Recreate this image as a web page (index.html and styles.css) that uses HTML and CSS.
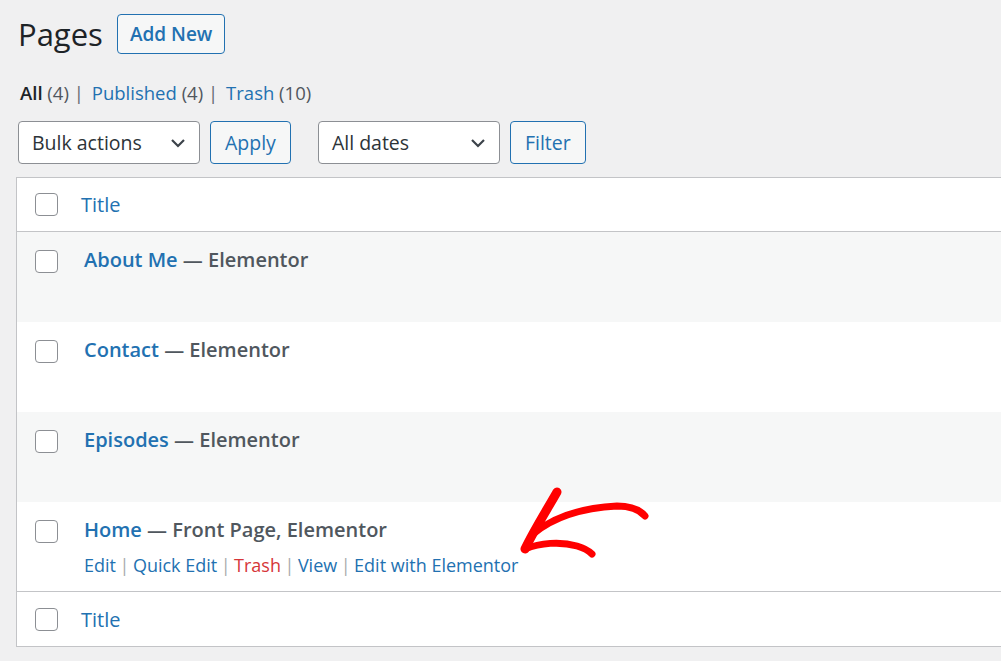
FILE: index.html
```html
<!DOCTYPE html>
<html lang="en">
<head>
    <meta charset="UTF-8">
    <title>Pages</title>
    <link rel="stylesheet" href="styles.css">
</head>
<body>

    <div class="wrap">

        <!-- Kopfzeile -->
        <div class="page-head">
            <h1>Pages</h1>
            <a class="add-new" href="#">Add New</a>
        </div>

        <ul class="subsubsub">
            <li><a class="current" href="#">All <span class="count">(4)</span></a> |</li>
            <li><a href="#">Published <span class="count">(4)</span></a> |</li>
            <li><a href="#">Trash <span class="count">(10)</span></a></li>
        </ul>

        <!-- Filter -->
        <div class="tablenav">
            <div class="select bulk">
                <span>Bulk actions</span>
                <svg width="16" height="10" viewBox="0 0 16 10"><path d="M2 2l6 6 6-6" fill="none" stroke="#3c434a" stroke-width="2.2"/></svg>
            </div>
            <button class="button">Apply</button>
            <div class="select dates">
                <span>All dates</span>
                <svg width="16" height="10" viewBox="0 0 16 10"><path d="M2 2l6 6 6-6" fill="none" stroke="#3c434a" stroke-width="2.2"/></svg>
            </div>
            <button class="button">Filter</button>
        </div>

        <!-- Tabelle -->
        <table class="pages">
            <thead>
                <tr>
                    <td class="check"><span class="cb"></span></td>
                    <th><a href="#">Title</a></th>
                </tr>
            </thead>
            <tbody>
                <tr class="alt">
                    <td class="check"><span class="cb"></span></td>
                    <td><strong><a href="#">About Me</a> — <span class="state">Elementor</span></strong></td>
                </tr>
                <tr>
                    <td class="check"><span class="cb"></span></td>
                    <td><strong><a href="#">Contact</a> — <span class="state">Elementor</span></strong></td>
                </tr>
                <tr class="alt">
                    <td class="check"><span class="cb"></span></td>
                    <td><strong><a href="#">Episodes</a> — <span class="state">Elementor</span></strong></td>
                </tr>
                <tr class="hover">
                    <td class="check"><span class="cb"></span></td>
                    <td>
                        <strong><a href="#">Home</a> — <span class="state">Front Page, Elementor</span></strong>
                        <div class="row-actions">
                            <a href="#">Edit</a><span class="sep">|</span><a href="#">Quick Edit</a><span class="sep">|</span><a class="trash" href="#">Trash</a><span class="sep">|</span><a href="#">View</a><span class="sep">|</span><a href="#">Edit with Elementor</a>
                        </div>
                    </td>
                </tr>
            </tbody>
            <tfoot>
                <tr>
                    <td class="check"><span class="cb"></span></td>
                    <th><a href="#">Title</a></th>
                </tr>
            </tfoot>
        </table>

    </div>

    <!-- roter Pfeil -->
    <svg class="arrow" width="140" height="80" viewBox="510 484 140 80">
        <path d="M557 492 C548 508 534 530 525 549" fill="none" stroke="#f00" stroke-width="9" stroke-linecap="round"/>
        <path d="M533 534 C552 518 580 508 617 506 C630 506 640 510 645 516" fill="none" stroke="#f00" stroke-width="7" stroke-linecap="round"/>
        <path d="M525 549 C540 543 560 541 577 546 C584 548 589 551 592 554" fill="none" stroke="#f00" stroke-width="7" stroke-linecap="round"/>
    </svg>

</body>
</html>
```

FILE: styles.css
```css
body {
    margin: 0;
    background-color: #f0f0f1;
    font-family: "Open Sans", sans-serif;
    color: #3c434a;
    overflow: hidden;
}
a {
    color: #2271b1;
    text-decoration: none;
}
.wrap {
    padding: 14px 0 0 16px;
}
.page-head {
    display: flex;
    align-items: center;
    gap: 14px;
    height: 40px;
}
h1 {
    margin: 0 0 0 2px;
    font-size: 31px;
    font-weight: 400;
    color: #1d2327;
}
.add-new {
    height: 38px;
    line-height: 38px;
    padding: 0 12px;
    border: 1px solid #2271b1;
    border-radius: 4px;
    background: #f6f7f7;
    font-size: 19px;
    font-weight: 600;
}
.subsubsub {
    list-style: none;
    margin: 26px 0 0 4px;
    padding: 0;
    display: flex;
    gap: 8px;
    height: 26px;
    line-height: 26px;
    font-size: 18.5px;
    color: #646970;
}
.subsubsub a.current {
    color: #1d2327;
    font-weight: 600;
}
.subsubsub .count {
    color: #50575e;
    font-weight: 400;
}
.tablenav {
    display: flex;
    margin: 15px 0 0 2px;
    height: 43px;
}
.select {
    display: flex;
    align-items: center;
    justify-content: space-between;
    box-sizing: border-box;
    width: 182px;
    height: 43px;
    padding: 0 13px 0 13px;
    border: 1px solid #8c8f94;
    border-radius: 4px;
    background: #fff;
    font-size: 19.5px;
    color: #2c3338;
}
.button {
    box-sizing: border-box;
    height: 43px;
    margin-left: 10px;
    padding: 0 14px;
    border: 1px solid #2271b1;
    border-radius: 4px;
    background: #f6f7f7;
    color: #2271b1;
    font-family: inherit;
    font-size: 19.5px;
}
.select.dates {
    margin-left: 27px;
}
.pages {
    width: 1000px;
    margin-top: 13px;
    border: 1px solid #c3c4c7;
    border-collapse: collapse;
    background: #fff;
    font-size: 20px;
}
.pages td,
.pages th {
    padding: 0;
    text-align: left;
    vertical-align: top;
}
.pages thead tr {
    height: 54px;
    border-bottom: 1px solid #c3c4c7;
}
.pages tfoot tr {
    height: 55px;
    border-top: 1px solid #c3c4c7;
}
.pages thead th,
.pages tfoot th {
    font-weight: 400;
    vertical-align: middle;
}
.pages thead td,
.pages tfoot td {
    vertical-align: middle;
}
.pages tbody tr {
    height: 90px;
}
.pages tbody tr.alt {
    background: #f6f7f7;
}
.pages tbody td {
    padding-top: 14px;
}
.pages tbody td.check {
    padding-top: 18px;
}
.check {
    width: 64px;
}
.cb {
    display: block;
    box-sizing: border-box;
    width: 23px;
    height: 23px;
    margin-left: 18px;
    border: 1px solid #8c8f94;
    border-radius: 4px;
    background: #fff;
}
.pages strong {
    font-weight: 600;
    color: #50575e;
    padding-left: 3px;
}
.state {
    color: #50575e;
}
.row-actions {
    margin-top: 10px;
    padding-left: 3px;
    font-size: 18px;
}
.row-actions .sep {
    color: #a7aaad;
    margin: 0 3.5px;
}
.row-actions .trash {
    color: #d63638;
}
.arrow {
    position: absolute;
    left: 510px;
    top: 484px;
}
```
